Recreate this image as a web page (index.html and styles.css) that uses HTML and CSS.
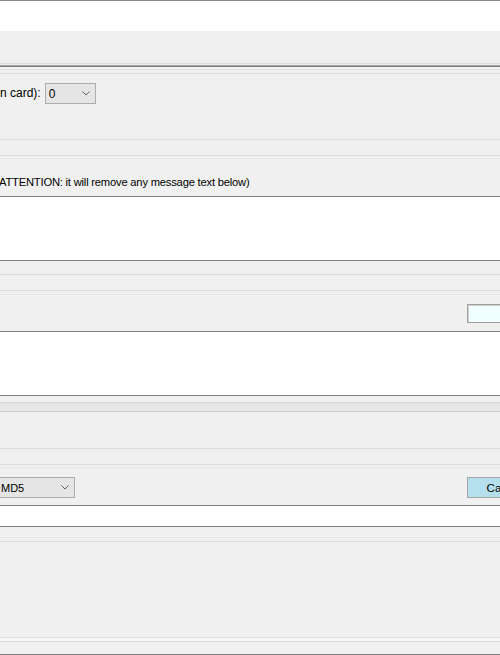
FILE: index.html
```html
<!DOCTYPE html>
<html>
<head>
<meta charset="utf-8">
<link rel="stylesheet" href="styles.css">
</head>
<body>
<div class="window">
  <div class="field-top"></div>
  <div class="band h32"></div>
  <div class="rule c-dc"></div>
  <div class="gap h1"></div>
  <div class="rule c-a0"></div>
  <div class="rule c-80"></div>
  <div class="gap h2"></div>
  <div class="rule c-e3"></div>
  <div class="gap h3"></div>
  <div class="rule c-dc"></div>

  <div class="row row-combo">
    <span class="label">n card):</span>
    <div class="combo combo-small"><span class="combo-value">0</span><svg class="chev" viewBox="0 0 8 5" width="8" height="5"><path d="M0.5 0.5 L4 4 L7.5 0.5" fill="none" stroke="#606060" stroke-width="1"/></svg></div>
  </div>

  <div class="rule c-dc"></div>
  <div class="gap h15"></div>
  <div class="rule c-dc"></div>
  <div class="gap h2"></div>
  <div class="rule c-e8"></div>
  <div class="row row-text">
    <span class="label shift">ATTENTION: it will remove any message text below)</span>
  </div>
  <div class="textarea h63"></div>

  <div class="gap h13"></div>
  <div class="rule c-dc"></div>
  <div class="gap h15"></div>
  <div class="rule c-dc"></div>
  <div class="gap h3"></div>
  <div class="rule c-e8"></div>
  <div class="row row-input">
    <div class="textbox"></div>
  </div>
  <div class="textarea h63"></div>

  <div class="gap h6"></div>
  <div class="rule c-d4"></div>
  <div class="strip"></div>
  <div class="rule c-ca"></div>
  <div class="gap h36"></div>
  <div class="rule c-dc"></div>
  <div class="gap h15"></div>
  <div class="rule c-dc"></div>
  <div class="gap h2"></div>
  <div class="rule c-e8"></div>
  <div class="row row-hash">
    <div class="combo combo-hash"><span class="combo-value">MD5</span><svg class="chev" viewBox="0 0 8 5" width="8" height="5"><path d="M0.5 0.5 L4 4 L7.5 0.5" fill="none" stroke="#606060" stroke-width="1"/></svg></div>
    <button class="btn">Cancel</button>
  </div>
  <div class="textarea h20"></div>

  <div class="gap h10"></div>
  <div class="rule c-e8"></div>
  <div class="gap h3"></div>
  <div class="rule c-dc"></div>
  <div class="gap h95"></div>
  <div class="rule c-e0"></div>
  <div class="gap h3 light"></div>
  <div class="rule c-dc"></div>
  <div class="gap h12"></div>
  <div class="rule c-80"></div>
</div>
</body>
</html>
```

FILE: styles.css
```css
html, body {
  margin: 0;
  padding: 0;
  overflow: hidden;
  background: #f0f0f0;
}

.window {
  width: 500px;
  height: 655px;
  overflow: hidden;
  font-family: "Liberation Sans", Arial, sans-serif;
  font-size: 11px;
  color: #000;
  background: #f0f0f0;
}

.field-top {
  height: 30px;
  background: #fff;
  border-top: 1px solid #8a8a8a;
}

.band { background: #f0f0f0; }

.rule { height: 1px; }
.c-dc { background: #dcdcdc; }
.c-a0 { background: #a0a0a0; }
.c-80 { background: #808080; }
.c-e3 { background: #e3e3e3; }
.c-e8 { background: #e8e8e8; }
.c-e0 { background: #e0e0e0; }
.c-d4 { background: #d4d4d4; }
.c-ca { background: #cacaca; }

.gap.light { background: #f6f6f6; }

.h1 { height: 1px; }
.h2 { height: 2px; }
.h3 { height: 3px; }
.h6 { height: 6px; }
.h10 { height: 10px; }
.h12 { height: 12px; }
.h13 { height: 13px; }
.h15 { height: 15px; }
.h32 { height: 32px; }
.h36 { height: 36px; }
.h95 { height: 95px; }

.row {
  display: flex;
  align-items: flex-start;
}

.row-combo {
  height: 56px;
  padding-top: 9px;
  gap: 4px;
}

.row-combo .label {
  font-size: 12px;
  line-height: 21px;
}

.label { white-space: nowrap; }
.label.shift {
  margin-left: -1px;
  letter-spacing: -0.2px;
}

.row-text {
  height: 21px;
  padding-top: 16px;
  line-height: 14px;
  font-size: 11.2px;
}

.combo {
  box-sizing: border-box;
  height: 21px;
  border: 1px solid #adadad;
  background: #e5e5e5;
  display: flex;
  align-items: center;
  justify-content: space-between;
}

.combo-small {
  width: 51px;
  padding: 0 5px 0 3px;
  font-size: 12px;
}

.combo-hash {
  width: 80px;
  margin-left: -5px;
  padding: 0 5px 0 5px;
}

.chev { display: block; }

.textarea {
  background: #fff;
  border-top: 1px solid #808080;
  border-bottom: 1px solid #808080;
}
.h63 { height: 63px; }
.h20 { height: 20px; }

.row-input {
  height: 27px;
  padding-top: 9px;
  justify-content: flex-end;
}

.textbox {
  box-sizing: border-box;
  width: 75px;
  height: 19px;
  margin-right: -42px;
  border: 1px solid #a0a0a0;
  box-shadow: inset 1px 1px 0 #d0d0d0;
  background: #f0ffff;
  flex: none;
}

.strip {
  height: 8px;
  background: #e6e6e6;
}

.row-hash {
  height: 28px;
  padding-top: 9px;
  justify-content: space-between;
}

.btn {
  box-sizing: border-box;
  width: 75px;
  height: 21px;
  margin: 0 -42px 0 0;
  padding: 0;
  border: 1px solid #a6a6a6;
  background: #b6dfee;
  font-family: "Liberation Sans", Arial, sans-serif;
  font-size: 11.5px;
  color: #000;
  flex: none;
}
```
